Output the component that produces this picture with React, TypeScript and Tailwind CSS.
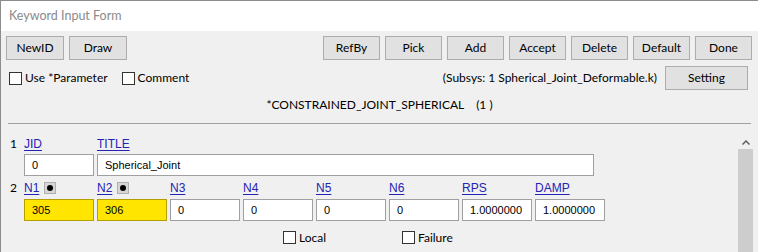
const btn =
  'h-[24px] border border-[#adadad] bg-[#e1e1e1] text-[12px] text-black flex items-center justify-center';

function Check({ label }: { label: string }) {
  return (
    <label className="flex items-center gap-[3px] text-[12px] text-black leading-none">
      <span className="w-[13px] h-[13px] border border-[#333] bg-white" />
      {label}
    </label>
  );
}

function Field({ value, yellow, w = 'w-[70px]' }: { value: string; yellow?: boolean; w?: string }) {
  return (
    <div
      className={`${w} h-[22px] border flex items-center pl-[7px] text-[11px] text-black font-['Liberation_Sans',sans-serif] ${
        yellow ? 'bg-[#ffe500] border-[#b59e00]' : 'bg-white border-[#a0a0a0]'
      }`}
    >
      {value}
    </div>
  );
}

function Label({ text, pick }: { text: string; pick?: boolean }) {
  return (
    <div className="w-[70px] h-[14px] flex items-center gap-[5px]">
      <span className="text-[12px] leading-none text-[#2323b5] underline underline-offset-2 font-['Liberation_Sans',sans-serif]">
        {text}
      </span>
      {pick && (
        <span className="w-[12px] h-[12px] bg-[#d6d6d6] border border-[#b0b0b0] flex items-center justify-center">
          <span className="w-[6px] h-[6px] rounded-full bg-black" />
        </span>
      )}
    </div>
  );
}

export default function App() {
  const right = ['RefBy', 'Pick', 'Add', 'Accept', 'Delete', 'Default', 'Done'];
  const row2 = [
    { k: 'N1', v: '305', y: true, p: true },
    { k: 'N2', v: '306', y: true, p: true },
    { k: 'N3', v: '0' },
    { k: 'N4', v: '0' },
    { k: 'N5', v: '0' },
    { k: 'N6', v: '0' },
    { k: 'RPS', v: '1.0000000' },
    { k: 'DAMP', v: '1.0000000' },
  ];

  return (
    <div className="w-[758px] h-[252px] overflow-hidden border-l border-t border-[#8c8c8c] bg-[#f0f0f0] flex flex-col font-['Lato',sans-serif]">
      {/* Title bar */}
      <div className="h-[30px] shrink-0 bg-white flex items-center pl-[8px] text-[12.5px] text-[#8a8a8a]">
        Keyword Input Form
      </div>

      {/* Buttons */}
      <div className="shrink-0 flex items-center mt-[5px] pl-[5px] pr-[6px]">
        <div className="flex gap-[5px]">
          <div className={`${btn} w-[58px]`}>NewID</div>
          <div className={`${btn} w-[58px]`}>Draw</div>
        </div>
        <div className="flex-1" />
        <div className="flex gap-[5px]">
          {right.map((b) => (
            <div key={b} className={`${btn} w-[57px]`}>
              {b}
            </div>
          ))}
        </div>
      </div>

      {/* Options */}
      <div className="shrink-0 h-[24px] flex items-center mt-[6px] pl-[8px] pr-[10px]">
        <div className="flex gap-[14px]">
          <Check label="Use *Parameter" />
          <Check label="Comment" />
        </div>
        <div className="flex-1" />
        <span className="text-[12px] text-black mr-[8px]">(Subsys: 1 Spherical_Joint_Deformable.k)</span>
        <div className={`${btn} w-[83px]`}>Setting</div>
      </div>

      <div className="shrink-0 h-[16px] text-center text-[12px] text-black mt-[7px] leading-[16px] whitespace-pre">
        {'*CONSTRAINED_JOINT_SPHERICAL    (1 )'}
      </div>

      <div className="shrink-0 mt-[10px] mx-[7px] h-px bg-[#a0a0a0]" />

      {/* Form */}
      <div className="flex flex-1 min-h-0">
        <div className="flex-1 pl-[9px] pt-[13px]">
          <div className="flex items-center">
            <span className="w-[14px] text-[12px] leading-none text-black">1</span>
            <div className="flex gap-[3px]">
              <Label text="JID" />
              <Label text="TITLE" />
            </div>
          </div>
          <div className="flex gap-[3px] ml-[14px] mt-[3px]">
            <Field value="0" />
            <Field value="Spherical_Joint" w="w-[497px]" />
          </div>
          <div className="flex items-center mt-[5px]">
            <span className="w-[14px] text-[12px] leading-none text-black">2</span>
            <div className="flex gap-[3px]">
              {row2.map((f) => (
                <Label key={f.k} text={f.k} pick={f.p} />
              ))}
            </div>
          </div>
          <div className="flex gap-[3px] ml-[14px] mt-[4px]">
            {row2.map((f) => (
              <Field key={f.k} value={f.v} yellow={f.y} />
            ))}
          </div>
          <div className="flex mt-[10px] ml-[273px]">
            <div className="w-[119px]">
              <Check label="Local" />
            </div>
            <Check label="Failure" />
          </div>
        </div>
        <div className="w-[15px] mr-[5px] mt-[11px] flex flex-col">
          <div className="h-[14px] bg-[#f0f0f0] flex items-center justify-center">
            <svg width="8" height="5" viewBox="0 0 8 5">
              <path d="M0.5 4.5 L4 1 L7.5 4.5" stroke="#606060" strokeWidth="1.5" fill="none" />
            </svg>
          </div>
          <div className="flex-1 bg-[#cdcdcd]" />
        </div>
      </div>
    </div>
  );
}
